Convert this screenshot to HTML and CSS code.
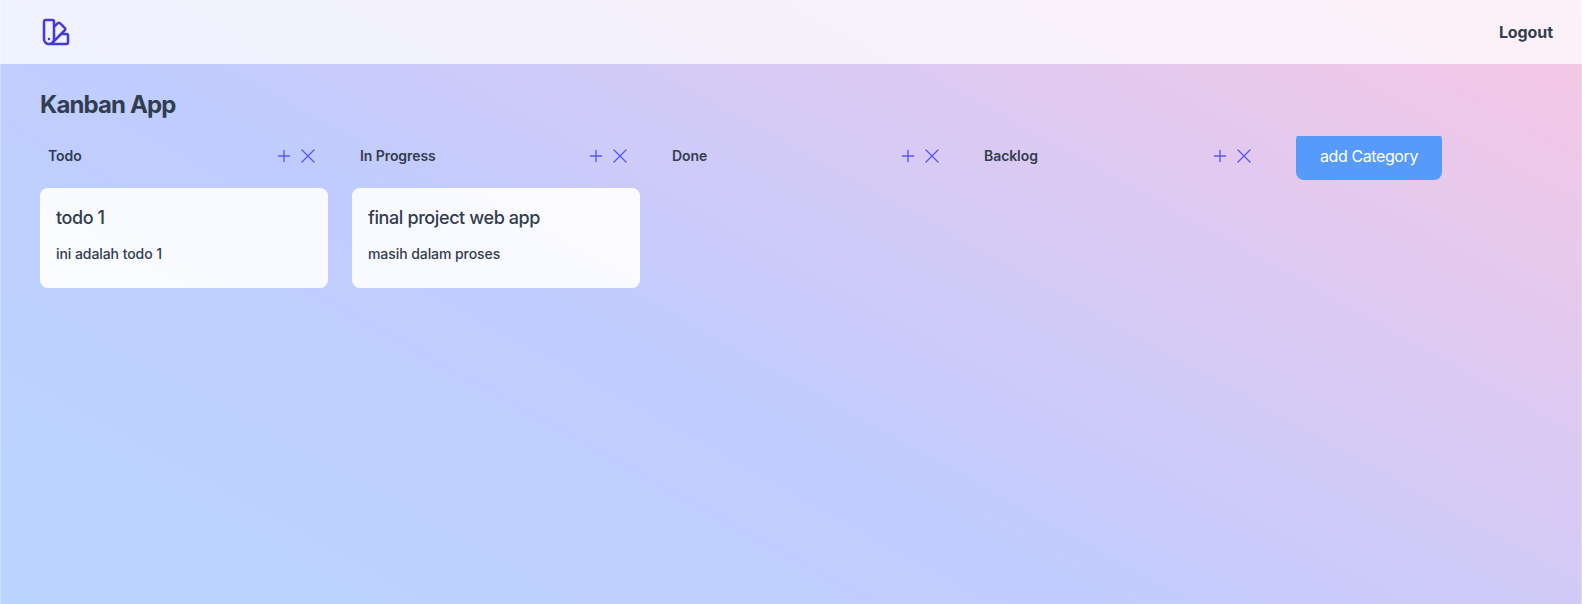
FILE: index.html
```html
<!DOCTYPE html>
<html lang="en">
<head>
<meta charset="utf-8">
<title>Kanban App</title>
<link rel="stylesheet" href="styles.css">
</head>
<body>
<svg class="sprite" aria-hidden="true">
  <symbol id="plus" viewBox="0 0 24 24"><path d="M12 6v12M6 12h12"/></symbol>
  <symbol id="close" viewBox="0 0 24 24"><path d="M6 18 18 6M6 6l12 12"/></symbol>
</svg>
<div class="app">
  <header class="navbar">
    <svg class="logo" viewBox="0 0 24 24"><path d="M4.098 19.902a3.75 3.75 0 0 0 5.304 0l6.401-6.402M6.75 21A3.75 3.75 0 0 1 3 17.25V4.125C3 3.504 3.504 3 4.125 3h5.25c.621 0 1.125.504 1.125 1.125v4.072M6.75 21a3.75 3.75 0 0 0 3.75-3.75V8.197M6.75 21h13.125c.621 0 1.125-.504 1.125-1.125v-5.25c0-.621-.504-1.125-1.125-1.125h-4.072M10.5 8.197l2.88-2.88c.438-.439 1.15-.439 1.59 0l3.712 3.713c.44.44.44 1.152 0 1.59l-2.879 2.88M6.75 17.25h.008v.008H6.75v-.008Z"/></svg>
    <a class="logout">Logout</a>
  </header>
  <h1 class="title">Kanban App</h1>
  <main class="board">
    <section class="column">
      <div class="column-head"><span class="name">Todo</span><svg class="icon icon-plus"><use href="#plus"/></svg><svg class="icon"><use href="#close"/></svg></div>
      <article class="card"><h2 class="card-title">todo 1</h2><p class="card-text">ini adalah todo 1</p></article>
    </section>
    <section class="column">
      <div class="column-head"><span class="name">In Progress</span><svg class="icon icon-plus"><use href="#plus"/></svg><svg class="icon"><use href="#close"/></svg></div>
      <article class="card"><h2 class="card-title">final project web app</h2><p class="card-text">masih dalam proses</p></article>
    </section>
    <section class="column">
      <div class="column-head"><span class="name">Done</span><svg class="icon icon-plus"><use href="#plus"/></svg><svg class="icon"><use href="#close"/></svg></div>
    </section>
    <section class="column">
      <div class="column-head"><span class="name">Backlog</span><svg class="icon icon-plus"><use href="#plus"/></svg><svg class="icon"><use href="#close"/></svg></div>
    </section>
    <button class="add">add Category</button>
  </main>
</div>
</body>
</html>
```
FILE: styles.css
```css
* { box-sizing: border-box; }
body { margin: 0; font-family: Inter, sans-serif; color: #323d4d; }
.sprite { display: none; }
.app {
  display: flex;
  flex-direction: column;
  height: 100vh;
  background: linear-gradient(to top right, #b7d9ff, #c0ccff, #f9c7e4) 0 0 / 100% 876px no-repeat;
  box-shadow: inset 1px 0 rgba(255, 255, 255, .3), inset -1px 0 rgba(255, 255, 255, .3);
}
.navbar {
  display: flex;
  flex: none;
  align-items: center;
  justify-content: space-between;
  height: 64px;
  padding: 0 29px 0 40px;
  background: rgba(255, 255, 255, .75);
}
.logo { width: 32px; height: 32px; fill: none; stroke: #4538dc; stroke-width: 1.9; stroke-linecap: round; stroke-linejoin: round; }
.logout { font-size: 16px; font-weight: 700; letter-spacing: -.08px; }
.title { margin: 25px 40px 15px; font-size: 24px; line-height: 32px; font-weight: 700; letter-spacing: -.87px; }
.board { display: flex; flex: 1; align-items: flex-start; gap: 24px; padding: 0 40px; overflow: hidden; }
.column { flex: none; width: 288px; }
.column-head { display: flex; align-items: center; height: 40px; padding: 0 8px; }
.name { flex: 1; font-size: 14px; font-weight: 600; line-height: 20px; letter-spacing: -.07px; }
.icon { width: 24px; height: 24px; fill: none; stroke: #5c58f2; stroke-width: 1.4; stroke-linecap: round; }
.icon-plus { stroke-linecap: butt; }
.card { height: 100px; margin-top: 12px; padding: 16px; border-radius: 8px; background: rgba(255, 255, 255, .9); }
.card-title { margin: 0; font-size: 18px; line-height: 28px; font-weight: 500; letter-spacing: -.4px; }
.card-text { margin: 12px 0 0; font-size: 14px; line-height: 20px; font-weight: 500; letter-spacing: -.07px; }
.add { flex: none; width: 146px; height: 48px; margin: -4px 0 0 8px; padding: 0; border: 0; border-radius: 8px; background: #569bfa; color: #fff; font: 400 16px/24px Inter, sans-serif; letter-spacing: -.4px; }
```
